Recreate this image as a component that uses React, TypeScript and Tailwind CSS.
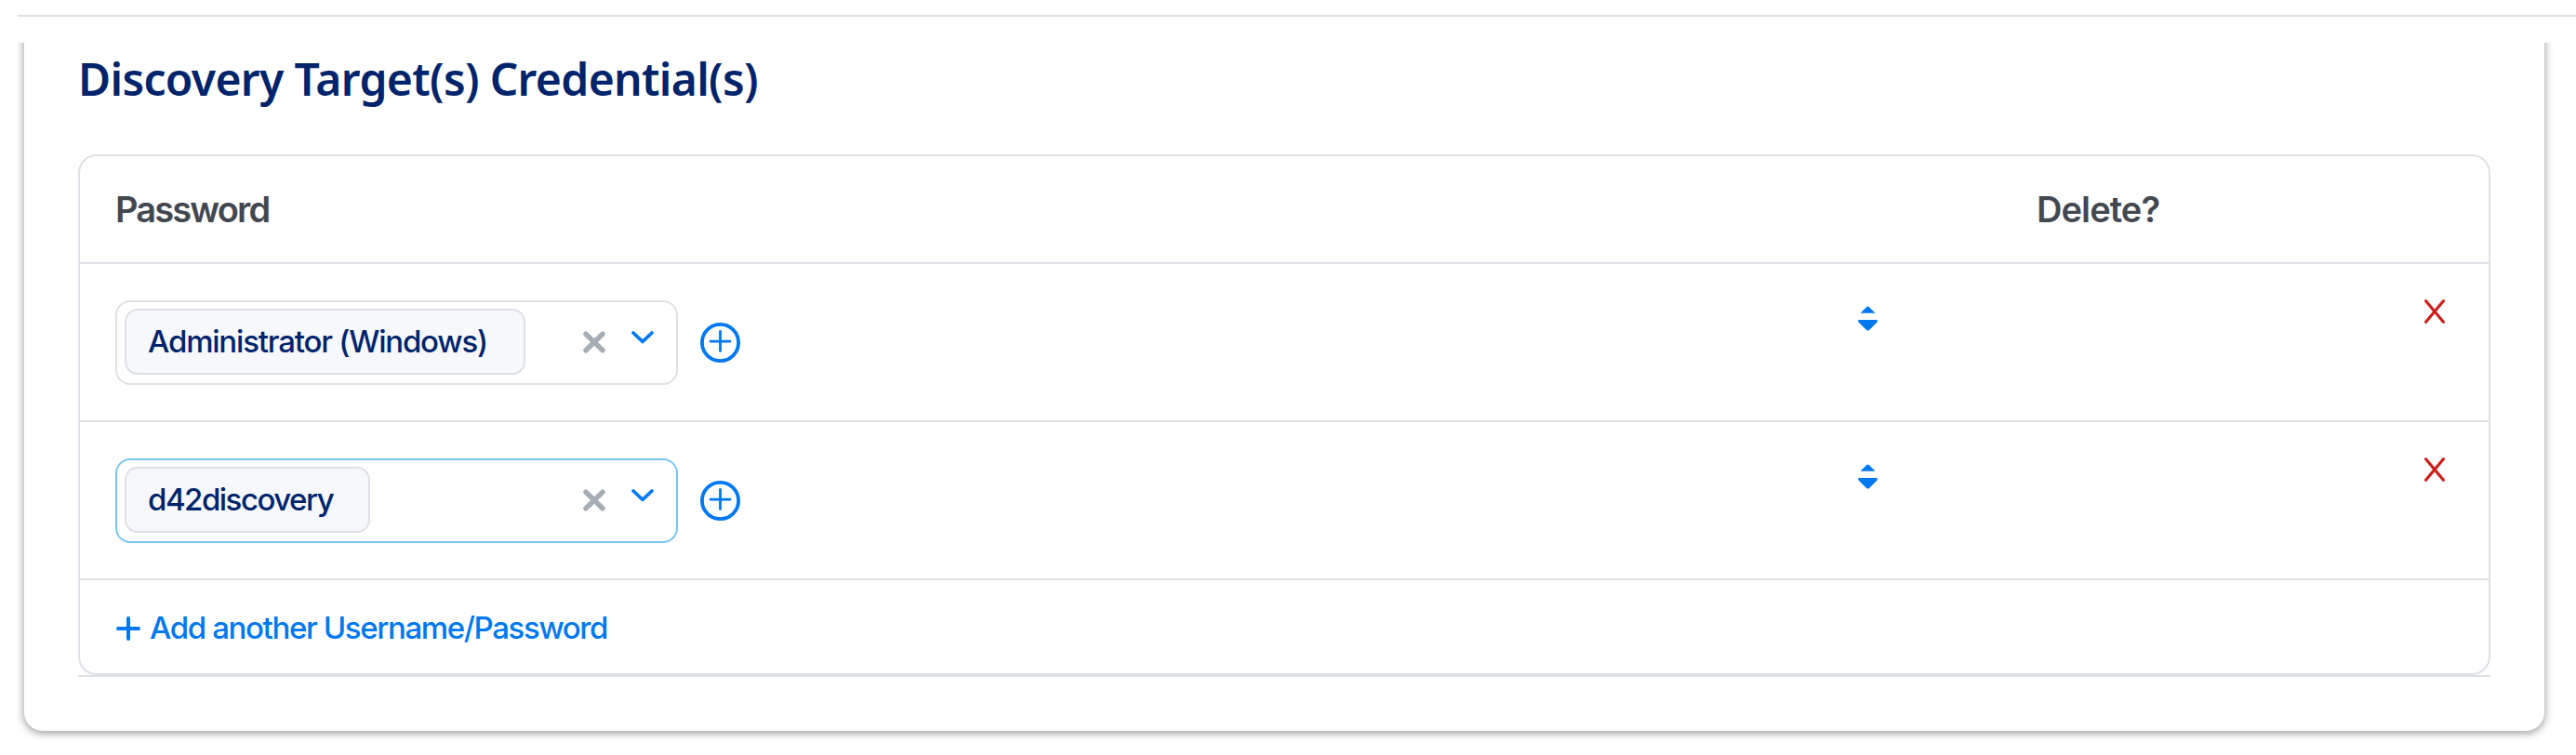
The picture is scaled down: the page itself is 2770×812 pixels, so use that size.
import React from "react";

function Chevron() {
  return (
    <svg className="mb-[10px] h-[14px] w-6 shrink-0" viewBox="0 0 24 14" fill="none" stroke="#0078f0" strokeWidth="3.6" strokeLinecap="round" strokeLinejoin="round">
      <path d="M2 2 L12 11.4 L22 2" />
    </svg>
  );
}

function ClearIcon() {
  return (
    <svg className="h-6 w-6 shrink-0" viewBox="0 0 24 24" fill="none" stroke="#a6adb5" strokeWidth="5.4" strokeLinecap="round">
      <path d="M3 3.2 L21 20.8 M21 3.2 L3 20.8" />
    </svg>
  );
}

function AddCircle() {
  return (
    <svg className="h-[43px] w-[43px] shrink-0" viewBox="0 0 43 43" fill="none" stroke="#0078f0" strokeLinecap="round">
      <circle cx="21.5" cy="21.5" r="19.6" strokeWidth="3.8" />
      <path d="M21.5 9.5 V30.5 M11 20.2 H32" strokeWidth="2.8" />
    </svg>
  );
}

function SortIcon() {
  return (
    <svg className="h-[27px] w-[21px]" viewBox="0 0 21 27" fill="#0078f0">
      <path d="M2.5 7.8 L9.3 1 Q10.5 0 11.7 1 L18.5 7.8 Z" />
      <path d="M0.4 15 H20.6 Q21.2 16.8 20 18 L12 26 Q10.5 27.2 9 26 L1 18 Q-0.2 16.8 0.4 15 Z" />
    </svg>
  );
}

function DeleteIcon() {
  return (
    <svg className="h-[26px] w-[22px]" viewBox="0 0 22 26" fill="none" stroke="#c9211e" strokeWidth="3.2" strokeLinecap="round">
      <path d="M1.6 1.8 L20.4 24.2 M20.4 1.8 L1.6 24.2" />
    </svg>
  );
}

interface RowProps {
  chip: React.ReactNode;
  focused?: boolean;
}

function CredentialRow({ chip, focused }: RowProps) {
  return (
    <div className="flex h-[170px] items-start border-b-2 border-[#dde1e6]">
      <div className="flex w-[1872px] items-center pt-[39px] pl-[38px]">
        <div className={`flex h-[91px] w-[605px] items-center rounded-[16px] border-2 pr-6 pb-0.5 pl-2 ${focused ? "border-[#7ac5f3]" : "border-[#dde1e6]"}`}>
          {chip}
          <div className="ml-auto flex items-center gap-7">
            <ClearIcon />
            <Chevron />
          </div>
        </div>
        <div className="ml-6 flex">
          <AddCircle />
        </div>
      </div>
      <div className="w-[200px] pt-[45px] pl-10">
        <SortIcon />
      </div>
      <div className="ml-auto pt-[38px] pr-[47px]">
        <DeleteIcon />
      </div>
    </div>
  );
}

const chipBase =
  "flex h-[71px] items-center rounded-[14px] border-2 border-[#dde1e6] bg-[#f7f8fb] pl-[23px] text-[33px] leading-none font-medium whitespace-nowrap text-[#00246b]";

export default function App() {
  return (
    <div className="h-[812px] w-[2770px] overflow-hidden bg-white pt-4 font-['Inter',sans-serif]">
      <div className="ml-[19px] h-0.5 bg-[#dde1e6]" />
      <div className="mt-7 h-[766px] overflow-hidden">
        <div className="-mt-10 mr-[34px] ml-[26px] h-[780px] rounded-[20px] bg-white px-[58px] pt-10 shadow-[0_2px_8px_1px_rgba(0,0,0,0.36)]">
          <h1 className="flex h-[120px] items-start pt-[9px] font-['Noto_Sans',sans-serif] text-[48px] leading-[60px] font-semibold whitespace-nowrap text-[#00246b]">
            <span className="tracking-[-0.66px]">Discovery Target(s) Credential(s)</span>
          </h1>
          <div className="h-[560px] rounded-[20px] border-2 border-[#dde1e6]">
            <div className="flex h-[116px] items-center border-b-2 border-[#dde1e6] pl-[38px] text-[38px] font-semibold text-[#434850]">
              <span className="w-[2066px] tracking-[-1.85px]">Password</span>
              <span className="tracking-[-0.9px]">Delete?</span>
            </div>
            <CredentialRow chip={<div className={`${chipBase} w-[431px] tracking-[-1.2px]`}>Administrator (Windows)</div>} />
            <CredentialRow focused chip={<div className={`${chipBase} w-[264px] tracking-[-1.5px]`}>d42discovery</div>} />
            <div className="flex h-[100px] items-center gap-2.5 pt-1 pl-[39px] text-[33px] font-medium text-[#0078f0]">
              <svg className="h-[26px] w-[26px]" viewBox="0 0 26 26" fill="none" stroke="#0078f0" strokeWidth="4" strokeLinecap="round">
                <path d="M13 2 V24 M2 13 H24" />
              </svg>
              <span className="tracking-[-1.38px] whitespace-nowrap">Add another Username/Password</span>
            </div>
          </div>
          <div className="h-0.5 bg-[#dde1e6]" />
        </div>
      </div>
    </div>
  );
}
